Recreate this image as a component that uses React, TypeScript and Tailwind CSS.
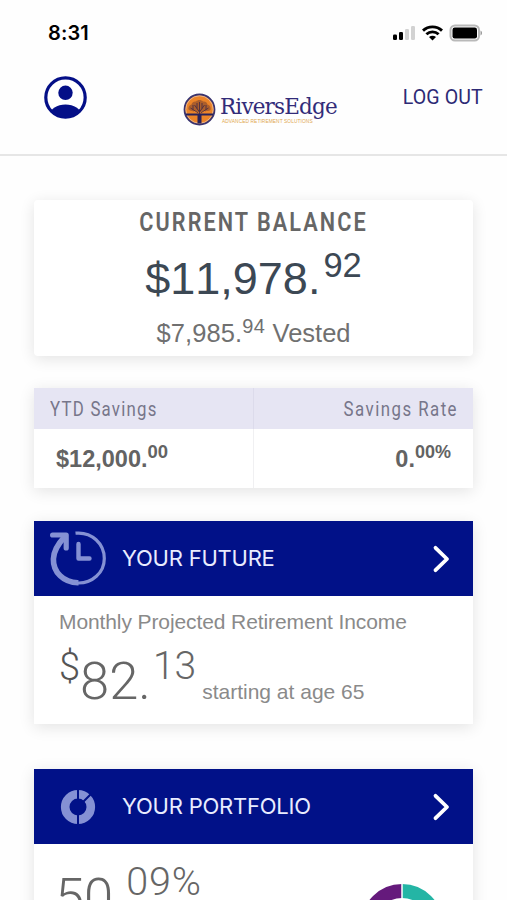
import type { ReactNode } from 'react';

const SANS = "font-['Liberation_Sans',Arial,sans-serif]";
const INTER = "font-['Inter',sans-serif]";
const ROBOTO = "font-['Roboto',sans-serif]";

function StatusBar() {
  return (
    <div className="flex h-[65px] items-center justify-between pl-[48px] pr-[24px]">
      <span className={`${INTER} text-[20px] font-semibold leading-none tracking-[0.1px] text-black`}>8:31</span>
      <div className="flex items-center">
        <svg width="24" height="16" viewBox="0 0 24 16">
          <rect x="1" y="9.5" width="4" height="5.5" rx="1.2" fill="#000" />
          <rect x="7" y="7" width="4" height="8" rx="1.2" fill="#000" />
          <rect x="13" y="4" width="4" height="11" rx="1.2" fill="#d2d2d2" />
          <rect x="19" y="1" width="4" height="14" rx="1.2" fill="#d2d2d2" />
        </svg>
        <svg className="ml-[6px]" width="21" height="16" viewBox="0 0 21 16" fill="none" stroke="#000" strokeWidth="2.9">
          <path d="M1 5.6C6.4 .6 14.6 .6 20 5.6" />
          <path d="M4.4 9.3c3.5-3.2 8.7-3.2 12.2 0" />
          <path d="M7 12.1c2.1-1.8 4.9-1.8 7 0L10.5 15.6z" fill="#000" stroke="none" />
        </svg>
        <svg className="ml-[6px]" width="34" height="18" viewBox="0 0 34 18">
          <rect x="1.5" y="1.5" width="28.5" height="15" rx="4.5" fill="#fff" stroke="#b9b9b9" strokeWidth="2" />
          <rect x="3.5" y="3.5" width="24.5" height="11" rx="2.2" fill="#000" />
          <path d="M31.5 6.5c2 .8 2 4.2 0 5z" fill="#999" />
        </svg>
      </div>
    </div>
  );
}

function Logo() {
  return (
    <div className="flex items-start pt-[28px]">
      <svg width="33" height="33" viewBox="0 0 33 33">
        <circle cx="16.5" cy="16.5" r="15" fill="#ec8428" stroke="#3a346f" strokeWidth="1.8" />
        <circle cx="16.5" cy="16.5" r="13.7" fill="none" stroke="#e9c9b0" strokeWidth="0.7" />
        <path
          d="M5.5 16.5c-.5-3 1.5-4.5 3-5 .5-2.5 3-3.5 4.5-3 2-2 5-2 7 0 2-.5 4 .5 4.5 3 2.5.7 3.7 3 3 5.5-2 1.5-4 .5-5 1.5-2-1.5-3-.5-4.5.5h-3c-1.5-1.5-3-1.5-4.5-.5-2-1-3.500-.5-5-2z"
          fill="#8b4a2c"
          fillOpacity="0.65"
        />
        <path
          d="M16.5 22V9M16.5 19l-5-7M16.5 19l5-7M15.5 20l-8-5M17.5 20l8-5M14 15.5V10M19 15.5V10M10 16.5V12M23 16.5V12"
          fill="none"
          stroke="#4a2c43"
          strokeWidth="0.9"
        />
        <path d="M3 20.5h27v2H18.5v8h-4v-8H3z" fill="#292259" />
      </svg>
      <div className="ml-[4px] flex w-[119px] flex-col">
        <span className="origin-left scale-x-[0.935] whitespace-nowrap font-['DejaVu_Serif',serif] text-[23px] leading-[26px] tracking-[-0.9px] text-[#322c79]">
          RiversEdge
        </span>
        <span className={`${SANS} ml-[2px] origin-left whitespace-nowrap text-[4.8px] leading-[6px] tracking-[0.1px] text-[#dfa850]`}>
          ADVANCED RETIREMENT SOLUTIONS
        </span>
      </div>
    </div>
  );
}

function Header() {
  return (
    <header className="flex h-[91px] items-start border-b-2 border-[#e6e6e6] pl-[44px] pr-[24px]">
      <svg className="mt-[11px]" width="43" height="43" viewBox="0 0 43 43">
        <defs>
          <clipPath id="avatar">
            <circle cx="21.5" cy="21.5" r="20" />
          </clipPath>
        </defs>
        <circle cx="21.5" cy="21.5" r="19.7" fill="#fff" stroke="#040f87" strokeWidth="3.2" />
        <circle cx="21.5" cy="16.8" r="7.2" fill="#040f87" />
        <ellipse cx="21.5" cy="39" rx="15.5" ry="10.5" fill="#040f87" clipPath="url(#avatar)" />
      </svg>
      <div className="ml-[96px] flex-1">
        <Logo />
      </div>
      <span className={`${ROBOTO} mt-[20px] origin-right scale-x-[0.955] whitespace-nowrap text-[20.5px] leading-[24px] tracking-[0.1px] text-[#2d2a75]`}>
        LOG OUT
      </span>
    </header>
  );
}

function Card({ className = '', children }: { className?: string; children: ReactNode }) {
  return (
    <section className={`mx-[34px] w-[439px] bg-white shadow-[0_3px_15px_rgba(0,0,0,0.11)] ${className}`}>
      {children}
    </section>
  );
}

function CardHeader({ icon, title }: { icon: ReactNode; title: string }) {
  return (
    <div className="flex h-[75px] items-center bg-[#011188] text-white">
      <div className="flex w-[88px] justify-center">{icon}</div>
      <h2 className={`${INTER} flex-1 whitespace-nowrap pb-[1px] text-[22px] font-normal leading-none tracking-[-0.22px] text-[#e9ecff]`}>
        {title}
      </h2>
      <svg
        className="mr-[22px]"
        width="20"
        height="30"
        viewBox="0 0 20 30"
        fill="none"
        stroke="#fff"
        strokeWidth="3.8"
        strokeLinecap="round"
        strokeLinejoin="round"
      >
        <path d="M4.5 3.8L16 15L4.5 26.2" />
      </svg>
    </div>
  );
}

function ClockIcon() {
  return (
    <svg width="58" height="58" viewBox="0 0 58 58" fill="none" stroke="#8591d4">
      <path d="M26.5 3.2C43 1.5 55.3 14 55.3 28.5C55.3 43 43 53.3 29 53" strokeWidth="3.2" />
      <path d="M29.5 52.7C14.5 53 4 42 4.4 29C4.6 21 8.5 14.5 15.5 7" strokeWidth="5.6" />
      <path d="M3.6 5H17.2V18" strokeWidth="5.2" strokeLinecap="round" strokeLinejoin="round" />
      <path d="M29.5 14V28.5H40.5" strokeWidth="4.4" strokeLinecap="round" strokeLinejoin="round" />
    </svg>
  );
}

function RingIcon() {
  return (
    <svg width="36" height="36" viewBox="0 0 36 36" fill="none">
      <circle cx="18" cy="18" r="12.8" stroke="#8591d4" strokeWidth="8.6" />
      <path d="M18 0V11M18 25V36M22 14L31 5" stroke="#011188" strokeWidth="2" />
    </svg>
  );
}

export default function App() {
  return (
    <div className="h-[900px] w-[507px] overflow-hidden bg-[#fefefe]">
      <StatusBar />
      <Header />

      <Card className="mt-[44px] h-[156px] rounded-[4px] pt-[10px] text-center">
        <h1 className={`${ROBOTO} scale-x-[0.85] whitespace-nowrap text-[25.5px] font-semibold leading-[24px] tracking-[2.4px] text-[#666]`}>
          CURRENT BALANCE
        </h1>
        <p className={`${SANS} mt-[20px] whitespace-nowrap text-[45px] leading-[50px] text-[#3c4854] [font-kerning:none]`}>
          $11,978.<span className="ml-[3px] align-[17px] text-[34.5px] leading-[0]">92</span>
        </p>
        <p className={`${SANS} mt-[14px] whitespace-nowrap text-[25.5px] leading-[30px] text-[#707070]`}>
          <span className="tracking-[0.1px]">$7,985.</span>
          <span className="align-[9px] text-[20px] leading-[0] tracking-[0.5px]">94</span> Vested
        </p>
      </Card>

      <Card className="mt-[32px] grid h-[100px] grid-cols-[220px_219px] grid-rows-[41px_59px]">
        <div className={`${ROBOTO} border-r border-[#dcdbeb] bg-[#e6e5f3] pl-[16px] text-[20.5px] leading-[42px] text-[#77768a]`}>
          <div className="origin-left scale-x-[0.82] tracking-[1.5px]">YTD Savings</div>
        </div>
        <div className={`${ROBOTO} bg-[#e6e5f3] pr-[15px] text-right text-[20.5px] leading-[42px] text-[#77768a]`}>
          <div className="origin-right scale-x-[0.82] tracking-[1.8px]">Savings Rate</div>
        </div>
        <div className={`${SANS} border-r border-[#f0f0f2] pl-[22px] text-[23.5px] font-bold leading-[60px] text-[#636363]`}>
          $12,000.<span className="align-[9px] text-[18.5px] leading-[0]">00</span>
        </div>
        <div className={`${SANS} pr-[22px] text-right text-[23.5px] font-bold leading-[60px] text-[#636363]`}>
          0.<span className="align-[9px] text-[18px] leading-[0]">00%</span>
        </div>
      </Card>

      <Card className="mt-[33px] h-[203px]">
        <CardHeader icon={<ClockIcon />} title="YOUR FUTURE" />
        <div className="pl-[25px] pt-[13px]">
          <p className={`${SANS} whitespace-nowrap text-[21px] leading-[26px] tracking-[-0.1px] text-[#8a8a8a]`}>
            Monthly Projected Retirement Income
          </p>
          <p className={`${ROBOTO} mt-[16px] whitespace-nowrap text-[52.5px] font-light leading-[60px] text-[#666]`}>
            <span className="align-[19px] text-[38px] leading-[0] text-[#555]">$</span>82.
            <span className="ml-[2px] align-[20px] text-[39px] leading-[0]">13</span>
            <span className={`${SANS} ml-[6px] text-[21px] font-normal leading-[0] text-[#8a8a8a]`}>starting at age 65</span>
          </p>
        </div>
      </Card>

      <Card className="mt-[45px] h-[204px]">
        <CardHeader icon={<RingIcon />} title="YOUR PORTFOLIO" />
        <div className="flex h-[120px] items-start justify-between overflow-hidden pl-[21px] pr-[27px]">
          <p className={`${ROBOTO} mt-[23px] whitespace-nowrap text-[52.5px] font-light leading-[60px] text-[#666]`}>
            50<span className="ml-[13px] align-[20px] text-[39.5px] leading-[0] tracking-[0.8px]">09%</span>
          </p>
          <svg className="mt-[37px]" width="88" height="88" viewBox="0 0 88 88" fill="none" strokeWidth="14">
            <path d="M44 10A34 34 0 0 1 44 78" stroke="#24b5a5" />
            <path d="M44 78A34 34 0 0 1 44 10" stroke="#651a7c" />
            <path d="M44 0V88" stroke="#fff" strokeWidth="1.5" />
          </svg>
        </div>
      </Card>
    </div>
  );
}
